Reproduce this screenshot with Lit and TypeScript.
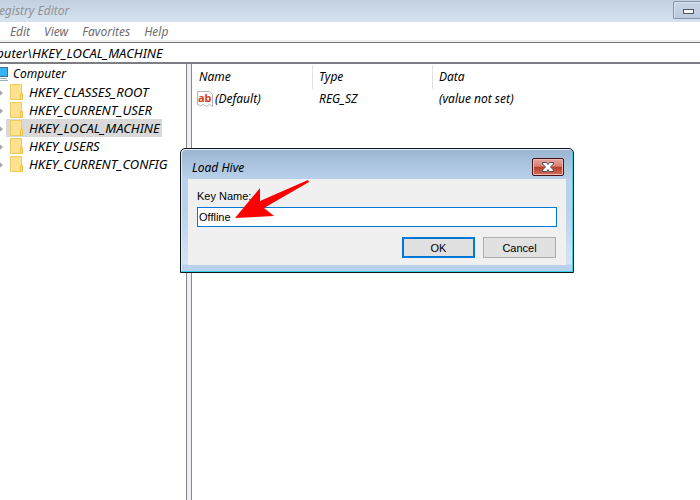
import { LitElement, html, css } from "lit";
import { customElement, state } from "lit/decorators.js";

const KEYS = [
  "HKEY_CLASSES_ROOT",
  "HKEY_CURRENT_USER",
  "HKEY_LOCAL_MACHINE",
  "HKEY_USERS",
  "HKEY_CURRENT_CONFIG",
];

const folderIcon = html`<svg width="14" height="16" viewBox="0 0 14 16">
  <path d="M.5.5h11v9h1v6h-12z" fill="#ffe18e" stroke="#f0cb5c" />
  <path d="M10.5 15.500v-6h2v6z" fill="#ffe28c" stroke="#eec24a" />
</svg>`;

@customElement("app-root")
export class AppRoot extends LitElement {
  @state() private selected = "HKEY_LOCAL_MACHINE";

  static styles = css`
    :host {
      display: block;
      position: relative;
      height: 100vh;
      overflow: hidden;
      background: #fff;
      color: #000;
      font: italic 12px/18px "Noto Sans", "Open Sans", sans-serif;
    }
    .window {
      display: flex;
      flex-direction: column;
      height: 100%;
      margin-left: -40px;
    }
    .titlebar {
      display: flex;
      justify-content: space-between;
      height: 22px;
      background: linear-gradient(#c2d0df, #d6e4f2);
      color: #929292;
    }
    .title {
      padding: 2px 0 0 32px;
    }
    .minimize {
      display: flex;
      align-items: center;
      box-sizing: border-box;
      width: 27px;
      height: 18px;
      margin-top: 1px;
      padding: 4px 0 0 9px;
      border: 1px solid #8795ab;
      border-right: 0;
      border-radius: 2px 0 0 2px;
      background: linear-gradient(#c9d5e4, #bccbdd);
      box-shadow: inset 1px 1px #d8e2ee;
    }
    .menu {
      display: flex;
      gap: 14px;
      height: 20px;
      padding-left: 18px;
    }
    .menu button {
      padding: 0;
      border: 0;
      background: none;
      color: #6d6d6d;
      font: inherit;
    }
    .address {
      flex: none;
      height: 19px;
      padding-left: 10px;
      border-top: 1px solid #747474;
      border-bottom: 2px solid #7d7e84;
      box-shadow: 0 -2px #f0f0f0;
      font-size: 13px;
    }
    .address input {
      width: 100%;
      height: 19px;
      padding: 0;
      border: 0;
      outline: 0;
      background: none;
      font: inherit;
      color: inherit;
    }
    .panes {
      display: flex;
      flex: 1;
    }
    .tree {
      width: 226px;
      padding-top: 1px;
      border-right: 1px solid #828790;
    }
    .tree ul {
      margin: 0;
      padding: 0;
      list-style: none;
    }
    .root,
    .tree li {
      display: flex;
      align-items: center;
      height: 18px;
    }
    .root {
      gap: 5px;
      padding-left: 32px;
    }
    .tree li {
      padding-left: 37px;
      font-size: 13px;
    }
    .key {
      display: flex;
      align-items: center;
      gap: 5px;
      height: 18px;
      margin-left: 3px;
      padding: 0 2px 0 4px;
      border: 0;
      background: none;
      color: inherit;
      font: inherit;
    }
    .key.selected {
      background: #d9d9d9;
    }
    .splitter {
      width: 4px;
      background: #f0f0f0;
      border-right: 1px solid #828790;
    }
    .values {
      flex: 1;
      padding: 1px 0 0 1px;
    }
    table {
      width: 100%;
      border-spacing: 0;
      table-layout: fixed;
    }
    th,
    td {
      box-sizing: border-box;
      height: 20px;
      padding: 0 0 0 6px;
      text-align: left;
      font-weight: 400;
    }
    th {
      height: 24px;
      border-right: 1px solid #e2e2e2;
    }
    th:last-child {
      border: 0;
    }
    .col {
      width: 120px;
    }
    td.namecell {
      padding-left: 4px;
    }
    .name {
      display: flex;
      align-items: center;
      gap: 2px;
    }
    .badge {
      font: bold 11px "Noto Sans", sans-serif;
    }
    .dialog {
      position: absolute;
      left: 180px;
      top: 148px;
      box-sizing: border-box;
      width: 394px;
      padding: 0 7px 7px;
      border: 1px solid #10181c;
      border-radius: 5px 5px 0 0;
      background: linear-gradient(#9bb5d2, #b9d1ea 30px, #b9d1ea 60px, #d5e4f3 115px, #b9d1ea 116px);
      box-shadow: inset -1px -1px #35d3ea, inset 1px 1px #e4eef8;
    }
    .caption {
      display: flex;
      justify-content: space-between;
      align-items: center;
      height: 30px;
      padding: 0 2px 0 4px;
    }
    .caption span {
      padding-top: 7px;
    }
    .close {
      display: grid;
      place-items: center;
      box-sizing: border-box;
      width: 32px;
      height: 18px;
      margin-top: 6px;
      padding: 0;
      border: 1px solid #43141a;
      border-radius: 2px;
      background: linear-gradient(#e8a69c, #d98071 46%, #b93c24 50%, #d2705c);
      box-shadow: inset 0 0 0 1px #eebbb2;
    }
    .form {
      display: flex;
      flex-direction: column;
      padding: 8px 9px 7px;
      background: #f0f0f0;
      font: normal 11px/18px "Liberation Sans", Arial, sans-serif;
    }
    .form input {
      box-sizing: border-box;
      width: 100%;
      height: 20px;
      margin-top: 2px;
      padding: 0 1px;
      border: 1px solid #0078d7;
      outline: 0;
      background: #fff;
      font: inherit;
      color: #000;
    }
    .actions {
      display: flex;
      justify-content: flex-end;
      gap: 8px;
      margin: 10px 1px 0;
    }
    .actions button {
      width: 73px;
      height: 21px;
      padding: 0;
      border: 1px solid #adadad;
      background: #e1e1e1;
      font: inherit;
      color: #000;
    }
    .actions .default {
      border: 2px solid #0078d7;
    }
    .arrow {
      position: absolute;
      left: 234px;
      top: 180px;
    }
    svg {
      display: block;
      flex: none;
    }
  `;

  render() {
    return html`
      <main class="window">
        <header class="titlebar">
          <span class="title">Registry Editor</span>
          <button class="minimize" aria-label="Minimize">
            <svg width="12" height="6" viewBox="0 0 12 6">
              <rect x=".5" y=".5" width="10" height="4" fill="#f5f5f5" stroke="#525768" />
            </svg>
          </button>
        </header>
        <nav class="menu">
          ${["File", "Edit", "View", "Favorites", "Help"].map((m) => html`<button>${m}</button>`)}
        </nav>
        <div class="address">
          <input aria-label="Address" .value=${"Computer\\" + this.selected} />
        </div>
        <div class="panes">
          <section class="tree">
            <div class="root">
              <svg width="16" height="16" viewBox="0 0 16 16">
                <path d="M0 1h16v10H0z" fill="#3b7299" />
                <path d="M0 2h15v8H0z" fill="#35b4f5" />
                <path d="M0 12.500h15M0 14.500h16" stroke="#9aaebc" />
              </svg>
              <span>Computer</span>
            </div>
            <ul>
              ${KEYS.map(
                (k) => html`<li>
                  <svg width="6" height="9" viewBox="0 0 6 9">
                    <path d="M2 1.500l4 3.500-4 3.500z" fill="#a6a6a6" />
                  </svg>
                  <button
                    class="key ${k === this.selected ? "selected" : ""}"
                    @click=${() => (this.selected = k)}
                  >
                    ${folderIcon}<span>${k}</span>
                  </button>
                </li>`
              )}
            </ul>
          </section>
          <div class="splitter"></div>
          <section class="values">
            <table>
              <thead>
                <tr>
                  <th class="col">Name</th>
                  <th class="col">Type</th>
                  <th>Data</th>
                </tr>
              </thead>
              <tbody>
                <tr>
                  <td class="namecell">
                    <span class="name">
                      <svg width="16" height="16" viewBox="0 0 16 16">
                        <path d="M.5.5h12l3 3v12l-3-2-3 2-3-2-3 1-3-1z" fill="#fff" stroke="#b5b5b5" />
                        <text class="badge" x="1" y="11" fill="#d2431f">ab</text>
                      </svg>
                      (Default)
                    </span>
                  </td>
                  <td>REG_SZ</td>
                  <td>(value not set)</td>
                </tr>
              </tbody>
            </table>
          </section>
        </div>
      </main>
      <section class="dialog" role="dialog" aria-labelledby="caption">
        <div class="caption">
          <span id="caption">Load Hive</span>
          <button class="close" aria-label="Close">
            <svg width="14" height="10" viewBox="0 0 14 10">
              <path
                d="M1.500.5h4l1.500 2 1.500-2h4v1.500l-3 3 3 3v1.500h-4l-1.500-2-1.500 2h-4v-1.500l3-3-3-3z"
                fill="#fff"
                stroke="#4b4f63"
              />
            </svg>
          </button>
        </div>
        <form class="form" @submit=${(e: Event) => e.preventDefault()}>
          <label for="key">Key Name:</label>
          <input id="key" value="Offline" />
          <div class="actions">
            <button class="default">OK</button>
            <button type="button">Cancel</button>
          </div>
        </form>
      </section>
      <svg class="arrow" width="76" height="40" viewBox="0 0 76 40">
        <path d="M1 38L26 8L26 21L74 0L75 2L30 28L40 36Z" fill="#f00" />
      </svg>
    `;
  }
}
